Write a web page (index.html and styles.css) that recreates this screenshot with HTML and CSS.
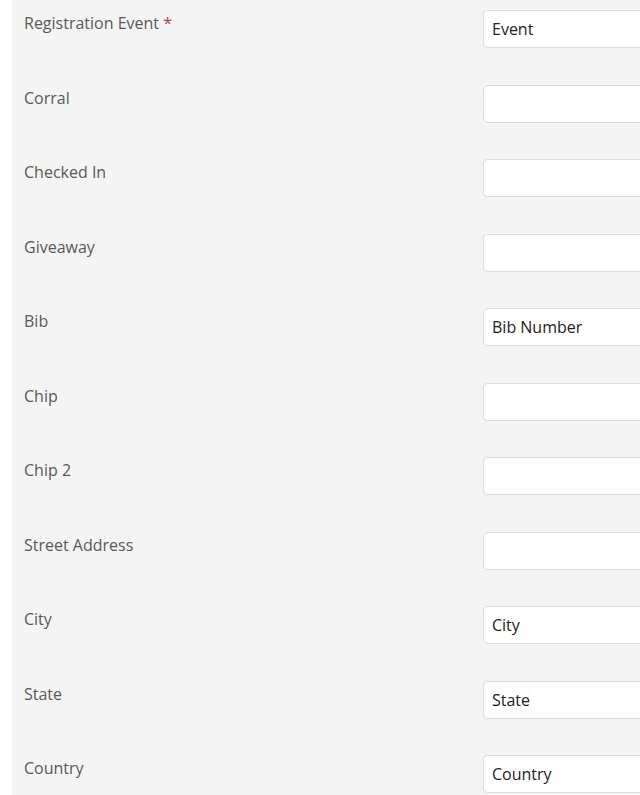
FILE: index.html
```html
<!DOCTYPE html>
<html lang="en">
<head>
  <meta charset="UTF-8">
  <meta name="viewport" content="width=device-width, initial-scale=1.0">
  <title>Registration</title>
  <link rel="stylesheet" href="styles.css">
</head>
<body>
  <div class="panel">
    <div class="form-row">
      <label for="event">Registration Event <span class="required">*</span></label>
      <input id="event" type="text" value="Event">
    </div>
    <div class="form-row">
      <label for="corral">Corral</label>
      <input id="corral" type="text">
    </div>
    <div class="form-row">
      <label for="checked-in">Checked In</label>
      <input id="checked-in" type="text">
    </div>
    <div class="form-row">
      <label for="giveaway">Giveaway</label>
      <input id="giveaway" type="text">
    </div>
    <div class="form-row">
      <label for="bib">Bib</label>
      <input id="bib" type="text" value="Bib Number">
    </div>
    <div class="form-row">
      <label for="chip">Chip</label>
      <input id="chip" type="text">
    </div>
    <div class="form-row">
      <label for="chip-2">Chip 2</label>
      <input id="chip-2" type="text">
    </div>
    <div class="form-row">
      <label for="street">Street Address</label>
      <input id="street" type="text">
    </div>
    <div class="form-row">
      <label for="city">City</label>
      <input id="city" type="text" value="City">
    </div>
    <div class="form-row">
      <label for="state">State</label>
      <input id="state" type="text" value="State">
    </div>
    <div class="form-row">
      <label for="country">Country</label>
      <input id="country" type="text" value="Country">
    </div>
  </div>
</body>
</html>
```

FILE: styles.css
```css
html, body {
  overflow: hidden;
}
body {
  margin: 0;
  padding-left: 12px;
  background-color: #fff;
  font-family: "Open Sans", "Noto Sans", Arial, sans-serif;
  font-size: 16px;
}
.panel {
  background-color: #f4f4f4;
  padding: 10px 0 0 12px;
  width: 800px;
}
.form-row {
  display: grid;
  grid-template-columns: 459px 300px;
  height: 74.5px;
  align-items: start;
}
.form-row label {
  color: #595959;
  line-height: 24px;
  padding-top: 1px;
}
.required {
  color: #a94442;
}
.form-row input {
  height: 38px;
  box-sizing: border-box;
  border: 1px solid #dcdcdc;
  border-radius: 4px;
  background: #fff;
  padding: 0 8px;
  font-family: inherit;
  font-size: 16px;
  color: #222;
}
```
